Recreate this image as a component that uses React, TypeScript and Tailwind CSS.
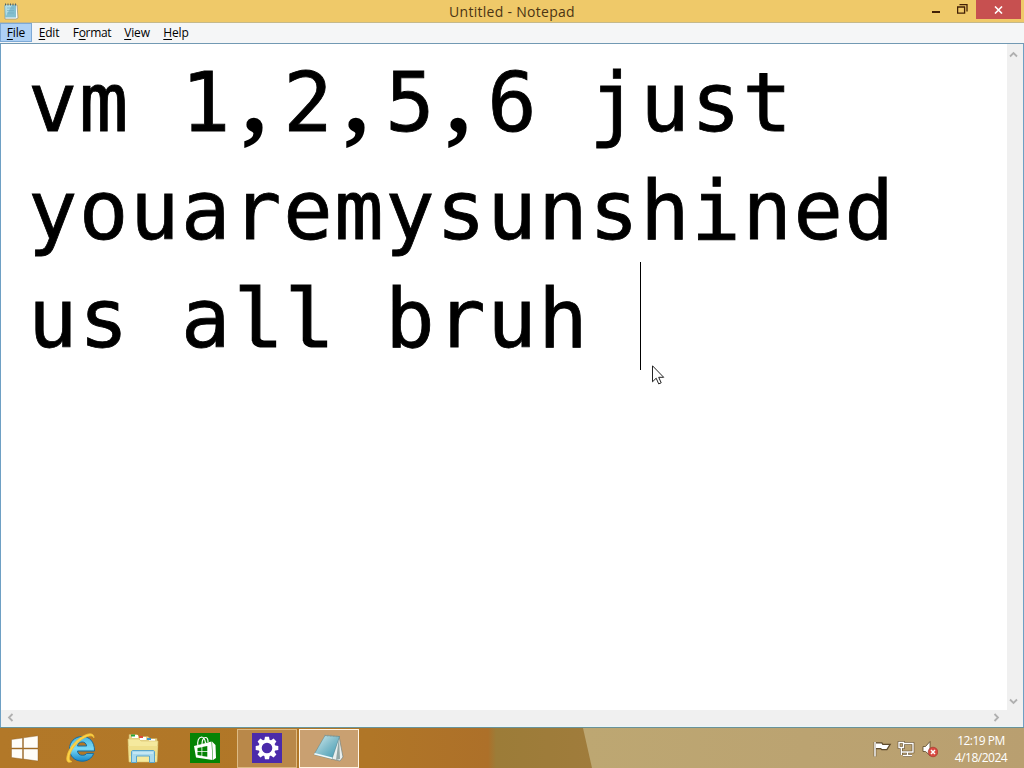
import React from 'react';

const menuItems = [
  { name: 'File', width: 'w-8' },
  { name: 'Edit', width: 'w-[33px]' },
  { name: 'Format', width: 'w-[52px]' },
  { name: 'View', width: 'w-[37px]' },
  { name: 'Help', width: 'w-10' },
];

const NotepadSmallIcon = () => (
  <svg width="16" height="18" viewBox="0 0 16 18">
    <path d="M2 3h12l1 13-2 1H2z" fill="#f8fafa" stroke="#8c8f84" strokeWidth=".7" />
    <path d="M1.5 3h11.5v12.5H2z" fill="#83bfd0" />
    <path d="M2 3h7L3 14z" fill="#b3dce4" />
    <path d="M4 6h7M4 8.5h7M4 11h7" stroke="#6eaabe" strokeWidth=".6" />
    <path d="M2.5 1.500v2M5 1.500v2M7.5 1.500v2M10 1.500v2M12.5 1.500v2" stroke="#4d6264" strokeWidth="1" />
  </svg>
);

const TitleBar = () => (
  <div className="flex h-[22px] items-start bg-[#efc969]">
    <div className="flex w-[100px] pl-[3px] pt-[2px]">
      <NotepadSmallIcon />
    </div>
    <div className="flex-1 pt-[1px] text-center text-[14px] leading-[22px] tracking-[0.28px] text-[#4b3514]">
      Untitled - Notepad
    </div>
    <div className="flex w-[100px]">
      <div className="flex w-[24px] justify-center pt-[11px]">
        <div className="h-[2px] w-2 bg-[#422006]" />
      </div>
      <div className="flex w-[28px] justify-center pt-1">
        <svg width="11" height="10" viewBox="0 0 11 10" fill="none" stroke="#422006">
          <path d="M.6 3.200h7v6h-7zM0 3h8" strokeWidth="1.3" />
          <path d="M2.5 .7h7.500v6.800" strokeWidth="1.3" />
        </svg>
      </div>
      <div className="flex h-[19px] w-[45px] items-center justify-center bg-[#c75050]">
        <svg width="9" height="8" viewBox="0 0 9 8">
          <path d="M1 .5l7 7M8 .5l-7 7" stroke="#fff" strokeWidth="1.6" />
        </svg>
      </div>
    </div>
  </div>
);

const MenuBar = () => (
  <div className="flex h-[22px] border-b border-[#7299b3] border-t border-t-[#c5b98b] bg-[#f5f6f7] text-[12px] leading-[20px] text-black">
    {menuItems.map((item) => (
      <div
        key={item.name}
        className={`${item.width} h-[19px] whitespace-nowrap text-center ${
          item.name === 'File' ? 'border border-[#7da9d6] bg-[#aed1f5] leading-[18px]' : 'ml-[0.5px]'
        } ${item.name === 'Format' ? 'tracking-[-0.35px]' : 'tracking-[-0.15px]'}`}
      >
        {item.name === 'Format' ? (
          <>F<span className="underline underline-offset-2">o</span>rmat</>
        ) : (
          <><span className="underline underline-offset-2">{item.name[0]}</span>{item.name.slice(1)}</>
        )}
      </div>
    ))}
  </div>
);

const Chevron = ({ d }: { d: string }) => (
  <svg width="9" height="9" viewBox="0 0 9 9" fill="none" stroke="#b0b0b0" strokeWidth="1.8">
    <path d={d} />
  </svg>
);

// lowercase l with a flat foot
const FlatL = () => (
  <span className="relative left-[-3px] font-['Liberation_Mono',monospace] text-[85px] leading-[0] tracking-[0.02px] [-webkit-text-stroke:1.2px_black]">l</span>
);

// round comma, kept on the same 51px pitch as the other glyphs
const Comma = () => (
  <span className="relative left-[-3px] top-[-1px] inline-block w-[51.03px] text-center font-['Liberation_Serif',serif] text-[106px] leading-[0] tracking-normal [-webkit-text-stroke:2.5px_black]">,</span>
);

const Editor = () => (
  <div className="flex flex-1 flex-col border-x border-[#6ea0c4] bg-white">
    <div className="flex flex-1">
      <div className="relative flex-1 pl-[27px] pt-[5px]">
        <div className="whitespace-pre font-['DejaVu_Sans_Mono',monospace] text-[82px] leading-[108px] tracking-[1.66px] text-black [-webkit-text-stroke:0.8px_black]">
          <div className="h-[108px]">vm 1<Comma />2<Comma />5<Comma />6 just</div>
          <div className="h-[108px]">youaremysunshined</div>
          <div className="h-[108px]">us a<FlatL /><FlatL /> bruh </div>
        </div>
        <div className="absolute left-[639px] top-[218px] h-[108px] w-px bg-black" />
        <svg className="absolute left-[651px] top-[321px]" width="13" height="20" viewBox="0 0 13 20">
          <path d="M.5 .8v16l3.7-3.6 2.5 5.7 2.5-1.1-2.5-5.5h5z" fill="#fff" stroke="#222" strokeWidth="1" />
        </svg>
      </div>
      <div className="flex w-[16px] flex-col items-center justify-between bg-[#f0f0f0] pb-[4px] pr-[3px] pt-[6px]">
        <Chevron d="M1 6.5L4.5 3 8 6.5" />
        <Chevron d="M1 2.5L4.5 6 8 2.5" />
      </div>
    </div>
    <div className="flex h-[17px] items-center justify-between border-b border-[#e7f6fa] bg-[#f0f0f0] pb-[2px] pl-[5px] pr-[22px]">
      <Chevron d="M6.5 1L3 4.5 6.5 8" />
      <Chevron d="M2.5 1L6 4.5 2.5 8" />
    </div>
  </div>
);

const StartIcon = () => (
  <svg width="28" height="27" viewBox="0 0 28 27" fill="#fffdf8" stroke="#855820" strokeWidth=".4">
    <path d="M.5 4.5L11.5 3v10H.5zM12.5 2.8L27 .8V13H12.5zM.5 14h11v10L.5 22.5zM12.5 14H27v12l-14.500-1.900z" />
  </svg>
);

const ExplorerEIcon = () => (
  <svg width="32" height="32" viewBox="0 0 32 32">
    <defs>
      <linearGradient id="ieBlue" x1="0" y1="0" x2="0" y2="1">
        <stop offset="0" stopColor="#48b6e2" />
        <stop offset=".5" stopColor="#7bdaf6" />
        <stop offset="1" stopColor="#1686c8" />
      </linearGradient>
    </defs>
    <path
      d="M29.500 19H12.500c.3 2.800 2.200 4.300 4.900 4.300 2.200 0 3.500-.7 4.300-1.900h7c-1.700 5-6.200 7.800-11.700 7.800C9.700 29.200 4.500 24 4.500 17S9.700 4.500 17 4.500 29.600 9.300 29.500 19zM12.500 14h9.200c-.4-2.700-2.200-4-4.500-4s-4.300 1.400-4.700 4z"
      fill="url(#ieBlue)"
      fillRule="evenodd"
      stroke="#176ca0"
      strokeWidth="1"
    />
    <path
      d="M7 29.500C3 31.500.7 29.500 2.200 23.500 4 15 13 5.500 21.500 2.500c4.500-1.600 8-.3 7.400 3.500-.9-2.300-3-2.700-6.500-1.500C14.500 7.500 7.300 15.200 5 22.500c-1.300 4-.5 6.700 2 7z"
      fill="#fbd448"
      stroke="#f0bd35"
      strokeWidth=".8"
    />
  </svg>
);

const FolderIcon = () => (
  <svg width="32" height="32" viewBox="0 0 32 32">
    <path d="M2 5V2.500h8l2 2h9l2 2h7V13H2z" fill="#e7d58a" stroke="#c8af60" strokeWidth=".5" />
    <path d="M5 3h6v3H5zM13 5h6v3h-6zM22 7h6v3h-6z" fill="#fff" />
    <path d="M4 2.500h4v2H4z" fill="#24a33a" />
    <path d="M12 4h4v2h-4z" fill="#dc4b37" />
    <path d="M20 6h4v2h-4z" fill="#4096cc" />
    <path d="M1 7h11l2 2h17l-1 21H2z" fill="#f5e99e" stroke="#d8c570" strokeWidth=".6" />
    <path d="M1.500 14h29L30 24H2z" fill="#efdf8b" />
    <path d="M6 18.500h20c1 0 1.500.5 1.500 1.500v10.500h-5V24h-13v6.500h-5V20c0-1 .5-1.500 1.500-1.500z" fill="#a9d9ed" stroke="#5aa5cb" strokeWidth="1" />
    <path d="M6 21h20" stroke="#e1f5fb" strokeWidth="1" />
  </svg>
);

const StoreIcon = () => (
  <svg width="30" height="30" viewBox="0 0 30 30">
    <path d="M0 0h30v30H0z" fill="#058305" />
    <path d="M8 13.500c-1-5.500.5-9 3.500-9.500 2.500 0 3.500 2.500 4 6M12 11c0-4 1.500-6.500 3.500-6.500 1.500 0 2.500 1.500 2.500 4.500" fill="none" stroke="#fff" strokeWidth="1.200" />
    <path d="M4 13L21.500 8.500 22.500 27 6 24.500zM22 8.500l3.500 3.500.5 13-3 2z" fill="#fff" />
    <path d="M7.500 15l4-.7v3.900h-4zM12.300 14.100l5-1v5.100h-5zM7.500 19h4v3.700l-4-.6zM12.300 19h5v4.800l-5-.9z" fill="#058305" />
  </svg>
);

const SettingsIcon = () => (
  <svg width="30" height="30" viewBox="0 0 30 30">
    <path d="M0 0h30v30H0z" fill="#4b2baa" />
    <g transform="translate(15 15)" fill="#fff">
      {[0, 45, 90, 135, 180, 225, 270, 315].map((angle) => (
        <path key={angle} d="M-2-11.300h4l.8 4.300h-5.600z" transform={`rotate(${angle})`} />
      ))}
      <circle r="6.900" fill="none" stroke="#fff" strokeWidth="3.200" />
    </g>
  </svg>
);

const NotepadIcon = () => (
  <svg width="32" height="30" viewBox="0 0 32 30">
    <defs>
      <linearGradient id="pad" x1="0" y1="0" x2="1" y2="1">
        <stop offset="0" stopColor="#d4eef0" />
        <stop offset=".5" stopColor="#83bdcb" />
        <stop offset="1" stopColor="#3896b0" />
      </linearGradient>
    </defs>
    <path d="M26 3l4 21-3 4-9-2z" fill="#e9efee" stroke="#73817e" strokeWidth=".7" />
    <path d="M26 4l1 22-4 1z" fill="#93a7a6" />
    <path d="M12 2.500l14.500 1L19 26 1 21.500z" fill="url(#pad)" stroke="#55818a" strokeWidth=".5" />
    <path d="M1 21.500L19 26l.5-1.500L1.700 20z" fill="#f0f9fa" />
    <path d="M12 1.500l-.3 2M15 1.500l-.3 2M18 1.700l-.3 2M21 2l-.3 2M24 2.200l-.3 2" stroke="#8a9a94" strokeWidth=".7" />
  </svg>
);

const TrayIcons = () => (
  <svg width="65" height="18" viewBox="0 0 65 18">
    <g fill="none" stroke="#5e4a2c" strokeWidth="2.600">
      <path d="M2 2v14.500M3 3.500h5.500l1 1.500H16l-2.500 4H9L8 8H3z" />
      <path d="M31 3.500h9v8.500H29M34.500 12v4M30 15.500h9M26 2.500h4.500v5H26zM28.300 8v7" />
    </g>
    <path d="M2 2v14.500" stroke="#fff" strokeWidth="1.500" />
    <path d="M3 3.500h5.500l1 1.500H16l-2.500 4H9L8 8H3z" fill="#fff" />
    <path d="M31 3.500h9v8.500H29M34.500 12v4M30 15.500h9M26 2.500h4.500v5H26zM28.300 8v7" fill="none" stroke="#fff" strokeWidth="1.400" />
    <path d="M50 6.500h2.500l4.500-5v14l-4.500-4H50z" fill="#fff" stroke="#574527" strokeWidth=".8" />
    <circle cx="60" cy="12" r="4.800" fill="#d94b42" stroke="#9e3128" strokeWidth=".6" />
    <path d="M58 10l4 4M62 10l-4 4" stroke="#fff" strokeWidth="1.500" />
  </svg>
);

const Taskbar = () => (
  <div className="relative flex h-10 bg-[linear-gradient(90deg,#b27828_0px,#b07627_370px,#ad7029_488px,#9c7c38_496px,#a07c3c_600px)]">
    <div className="absolute inset-y-0 left-[583px] right-0 bg-gradient-to-r from-[#bda772] to-[#b99f70] [clip-path:polygon(0_0,100%_0,100%_100%,9px_100%)]" />
    <div className="relative flex flex-1 items-center">
      <div className="flex w-[50px] justify-center"><StartIcon /></div>
      <div className="flex w-[62px] justify-center"><ExplorerEIcon /></div>
      <div className="flex w-[62px] justify-center"><FolderIcon /></div>
      <div className="flex w-[62px] justify-center"><StoreIcon /></div>
      <div className="ml-[1px] flex h-[39px] w-[60px] items-center justify-center border border-[#ddba83] bg-[#b98849]"><SettingsIcon /></div>
      <div className="ml-[2px] flex h-[39px] w-[60px] items-center justify-center border border-[#fff4e3] bg-[#c9a071]"><NotepadIcon /></div>
    </div>
    <div className="relative flex items-center pt-[1px]">
      <TrayIcons />
    </div>
    <div className="relative w-[86px] pt-[4px] text-center text-[12px] leading-[17px] tracking-[-0.5px] text-white">
      <div>12:19 PM</div>
      <div>4/18/2024</div>
    </div>
  </div>
);

const App: React.FC = () => {
  return (
    <div className="flex h-[768px] w-[1024px] flex-col overflow-hidden bg-white font-['Open_Sans',sans-serif]">
      <TitleBar />
      <MenuBar />
      <Editor />
      <div className="h-px bg-[#6b9298]" />
      <Taskbar />
    </div>
  );
};

export default App;
